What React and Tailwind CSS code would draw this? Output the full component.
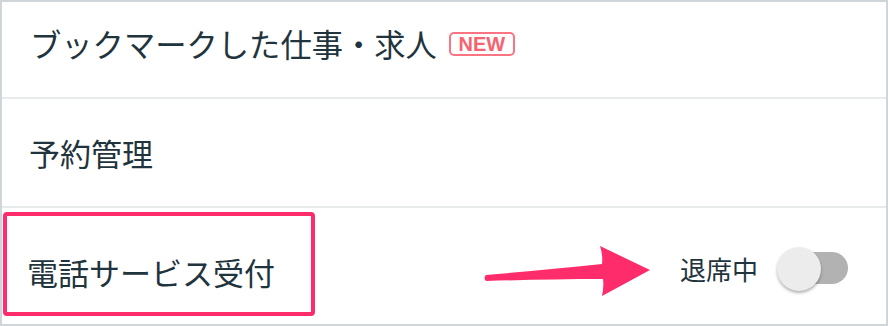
import React from 'react';

const jp = { fontFamily: '"Noto Sans CJK JP", "Noto Sans", sans-serif' };

function Arrow() {
  // annotation arrow pointing to the toggle
  return (
    <svg width="170" height="56" viewBox="0 0 170 56" className="shrink-0">
      <path
        d="M4 34 C40 31 80 27 120 23 Q121 14 118 5 L168 29 L120 55 Q122 46 121 38 C80 38 40 39 4 40 Q1 37 4 34 Z"
        fill="#fe2c6a"
      />
    </svg>
  );
}

function Toggle() {
  return (
    <div className="relative w-[71px] h-[44px] shrink-0">
      <div className="absolute right-0 top-[5px] w-[50px] h-[32px] rounded-full bg-[#b2b2b2]" />
      <div className="absolute left-0 top-0 w-[44px] h-[44px] rounded-full bg-[#ececec] shadow-[0_2px_3px_rgba(0,0,0,0.3)]" />
    </div>
  );
}

export default function App() {
  return (
    <div className="w-[888px] h-[326px] bg-white border-2 border-[#cfd5d8] flex flex-col text-[#1f343d]" style={jp}>
      <div className="h-[97px] flex items-center pl-[28px] pb-3 border-b-2 border-[#e8ebec] shrink-0">
        <span className="text-[31.3px] leading-none">ブックマークした仕事・求人</span>
        <span className="ml-[12px] w-[66px] h-[24px] flex items-center justify-center rounded-[5px] border-2 border-[#fa7482] text-[#f7636f] text-[20px] font-bold leading-none" style={{ fontFamily: '"Liberation Sans", Arial, sans-serif' }}>
          NEW
        </span>
      </div>
      <div className="h-[109px] flex items-center pl-[27px] border-b-2 border-[#e8ebec] shrink-0">
        <span className="text-[31px] leading-none">予約管理</span>
      </div>
      <div className="flex-1 flex items-start justify-between">
        <div className="ml-px mt-[4px] w-[312px] h-[104px] border-4 border-[#fe2c6a] rounded-[4px] flex items-center pl-[20px] pt-[14px]">
          <span className="text-[31px] leading-none">電話サービス受付</span>
        </div>
        <div className="mt-[33px] pr-[38px] flex items-center">
          <Arrow />
          <span className="ml-[28px] text-[26px] leading-none">退席中</span>
          <div className="ml-[19px]">
            <Toggle />
          </div>
        </div>
      </div>
    </div>
  );
}
